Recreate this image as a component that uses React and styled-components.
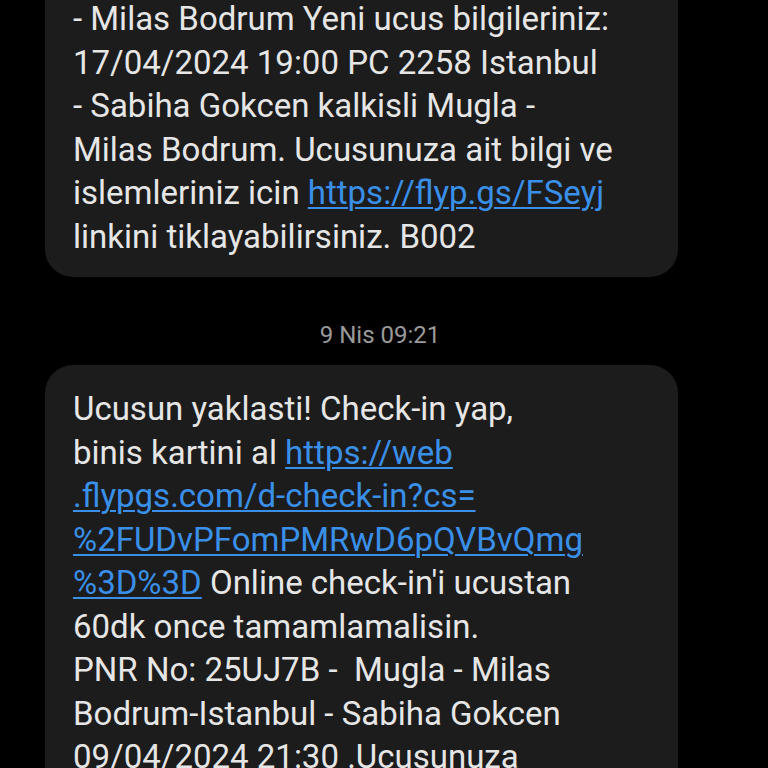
import styled, { createGlobalStyle } from "styled-components";

const GlobalStyle = createGlobalStyle`
    html, body {
        margin: 0;
        padding: 0;
        background: #000000;
        overflow: hidden;
    }
`;

export default function App() {
    return (
        <>
            <GlobalStyle />
            <Thread>
                <Bubble>
                    <p>
                        - Milas Bodrum Yeni ucus bilgileriniz:<br />
                        17/04/2024 19:00 PC 2258 Istanbul<br />
                        - Sabiha Gokcen kalkisli Mugla -<br />
                        Milas Bodrum. Ucusunuza ait bilgi ve<br />
                        islemleriniz icin <Link href="#">https://flyp.gs/FSeyj</Link><br />
                        linkini tiklayabilirsiniz. B002
                    </p>
                </Bubble>
                <Stamp>9 Nis 09:21</Stamp>
                <Bubble>
                    <p>
                        Ucusun yaklasti! Check-in yap,<br />
                        binis kartini al <Link href="#">https://web<br />
                        .flypgs.com/d-check-in?cs=<br />
                        %2FUDvPFomPMRwD6pQVBvQmg<br />
                        %3D%3D</Link> Online check-in'i ucustan<br />
                        60dk once tamamlamalisin.<br />
                        PNR No: 25UJ7B - &nbsp;Mugla - Milas<br />
                        Bodrum-Istanbul - Sabiha Gokcen<br />
                        09/04/2024 21:30 .Ucusunuza
                    </p>
                </Bubble>
            </Thread>
        </>
    );
}

const Thread = styled.main`
    display: flex;
    flex-direction: column;
    margin-top: -25px;
    font-family: Roboto, "Noto Sans", sans-serif;
`;

const Bubble = styled.div`
    margin: 0 90px 0 45px;
    background: #1c1c1c;
    border-radius: 28px;
    padding: 22px 20px 19px 28px;

    p {
        margin: 0;
        font-size: 33px;
        line-height: 43.5px;
        color: #e6e6e6;
        white-space: nowrap;
    }
`;

const Link = styled.a`
    color: #3a8fe8;
    text-decoration: underline;
    text-decoration-thickness: 1.5px;
    text-underline-offset: 3px;
`;

const Stamp = styled.div`
    text-align: center;
    color: #9a9a9a;
    font-size: 24px;
    line-height: 30px;
    padding: 43px 8px 15px 0;
`;
